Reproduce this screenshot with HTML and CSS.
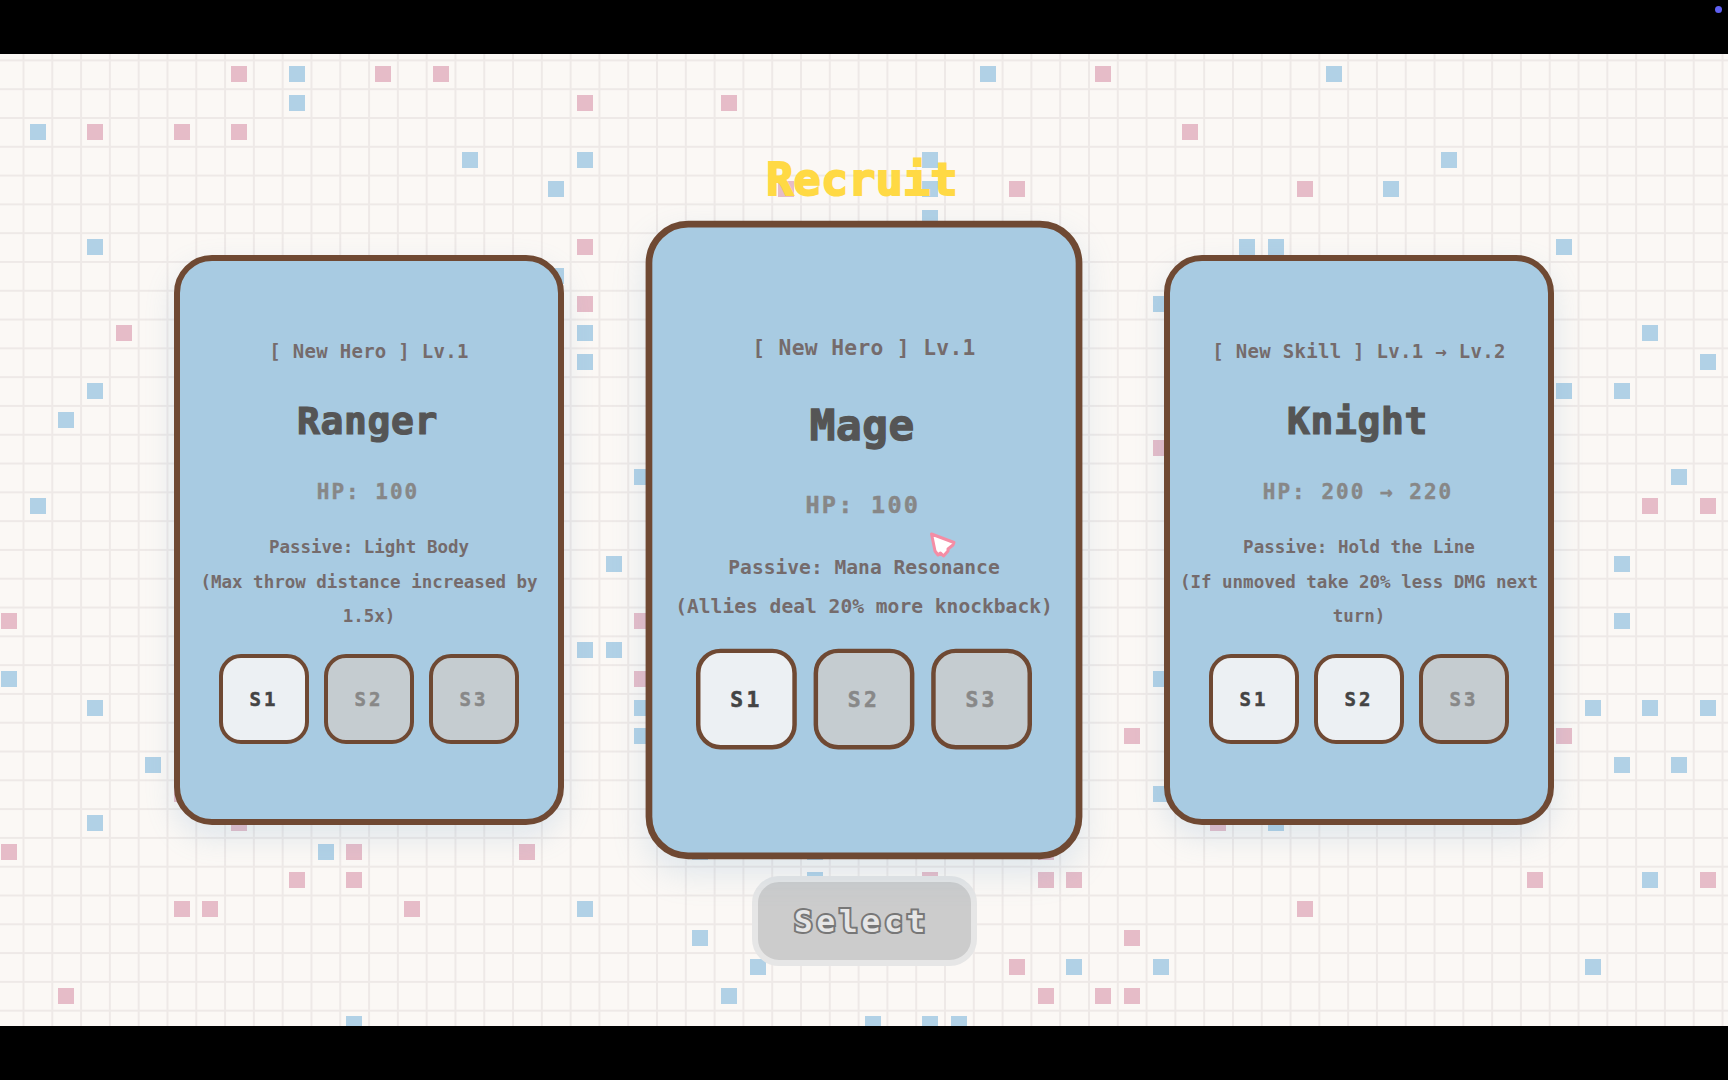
FILE: index.html
```html
<!DOCTYPE html>
<html lang="en">
<head>
    <meta charset="UTF-8">
    <meta name="viewport" content="width=device-width, initial-scale=1.0">
    <title>Recruit</title>
    <link rel="stylesheet" href="styles.css">
</head>
<body>
    <div class="letterbox"><span class="record-dot"></span></div>

    <main class="stage" id="stage">
        <div class="tiles" id="tiles"></div>

        <h1 class="title">Recruit</h1>

        <section class="cards">
            <article class="card">
                <p class="tag">[ New Hero ] Lv.1</p>
                <h2 class="name">Ranger</h2>
                <p class="hp">HP: 100</p>
                <p class="passive">Passive: Light Body<br>(Max throw distance increased by 1.5x)</p>
                <div class="skills">
                    <div class="skill">S1</div>
                    <div class="skill locked">S2</div>
                    <div class="skill locked">S3</div>
                </div>
            </article>

            <article class="card selected">
                <p class="tag">[ New Hero ] Lv.1</p>
                <h2 class="name">Mage</h2>
                <p class="hp">HP: 100</p>
                <p class="passive">Passive: Mana Resonance<br>(Allies deal 20% more knockback)</p>
                <div class="skills">
                    <div class="skill">S1</div>
                    <div class="skill locked">S2</div>
                    <div class="skill locked">S3</div>
                </div>
            </article>

            <article class="card">
                <p class="tag">[ New Skill ] Lv.1 → Lv.2</p>
                <h2 class="name">Knight</h2>
                <p class="hp">HP: 200 → 220</p>
                <p class="passive">Passive: Hold the Line<br>(If unmoved take 20% less DMG next turn)</p>
                <div class="skills">
                    <div class="skill">S1</div>
                    <div class="skill">S2</div>
                    <div class="skill locked">S3</div>
                </div>
            </article>
        </section>

        <button class="select-btn" disabled>Select</button>

        <svg class="cursor" width="29" height="28" viewBox="0 0 29 28">
            <path d="M3.5 3 L26 11.5 L25 14 L20 18 L20 20 L15.5 25 L12.5 22 L10 24 L7 20 Z" fill="#fff" stroke="#f48da5" stroke-width="3" stroke-linejoin="round"/>
        </svg>
    </main>

    <div class="letterbox"></div>

    <script src="main.js"></script>
</body>
</html>
```

FILE: styles.css
```css
:root {
    --paper: #fbf8f5;
    --grid-line: #eee9e7;
    --card-blue: #a8cbe2;
    --card-border: #6f4933;
    --pixel-font: 'DejaVu Sans Mono', 'Liberation Mono', monospace;
}

html, body {
    margin: 0;
    padding: 0;
    height: 100%;
    overflow: hidden;
    background: #000;
    font-family: var(--pixel-font);
    font-weight: bold;
}

.letterbox {
    position: relative;
    height: 54px;
    background: #000;
}

.record-dot {
    position: absolute;
    top: 6px;
    right: 6px;
    width: 7px;
    height: 7px;
    border-radius: 50%;
    background: #5f60f2;
}

.stage {
    position: relative;
    height: 972px;
    overflow: hidden;
    display: flex;
    flex-direction: column;
    align-items: center;
    background-color: var(--paper);
    background-image:
        linear-gradient(to right, var(--grid-line) 2px, transparent 2px),
        linear-gradient(to bottom, var(--grid-line) 2px, transparent 2px);
    background-size: 28.8px 28.8px;
    background-position: 22.5px 5.4px;
}

.tiles {
    position: absolute;
    inset: 0;
}

.tile {
    position: absolute;
    width: 16px;
    height: 16px;
}

.tile.pink { background: #e6bcc8; }
.tile.blue { background: #b1d1e6; }

.title {
    position: relative;
    margin: 98px 0 0;
    padding-right: 4px;
    height: 103px;
    font-size: 45px;
    letter-spacing: 0.3px;
    line-height: 56px;
    color: #ffd944;
    -webkit-text-stroke: 2px #ffd944;
}

.cards {
    position: relative;
    display: flex;
    gap: 105px;
}

.card {
    box-sizing: border-box;
    width: 390px;
    height: 570px;
    padding-top: 3px;
    border: 6px solid var(--card-border);
    border-radius: 38px;
    background: var(--card-blue);
    box-shadow: 0 12px 30px rgba(110, 160, 200, 0.2);
    display: flex;
    flex-direction: column;
    align-items: center;
    justify-content: center;
    text-align: center;
}

.card.selected {
    transform: scale(1.12);
    z-index: 1;
}

.tag {
    margin: 0;
    font-size: 19px;
    letter-spacing: 0.3px;
    line-height: 24px;
    color: #756b6c;
}

.name {
    margin: 36px 0 0;
    padding-right: 3px;
    font-size: 38px;
    letter-spacing: 0.6px;
    line-height: 44px;
    color: #555;
    -webkit-text-stroke: 1.2px #555;
}

.hp {
    margin: 35px 0 0;
    padding-right: 2px;
    font-size: 21px;
    letter-spacing: 2px;
    line-height: 28px;
    color: #878787;
    -webkit-text-stroke: 0.4px #878787;
}

.passive {
    margin: 24px 0 0;
    font-size: 17.5px;
    line-height: 34.4px;
    color: #756b6c;
}

.skills {
    display: flex;
    gap: 15px;
    margin-top: 20.5px;
}

.skill {
    box-sizing: border-box;
    width: 90px;
    height: 90px;
    border: 4px solid var(--card-border);
    border-radius: 22px;
    background: #ecf0f3;
    color: #444;
    font-size: 19px;
    letter-spacing: 3px;
    -webkit-text-stroke: 0.5px currentColor;
    display: flex;
    align-items: center;
    justify-content: center;
}

.skill.locked {
    background: #c5ccd0;
    color: #888;
}

.select-btn {
    position: relative;
    box-sizing: border-box;
    width: 225px;
    height: 90px;
    margin-top: 51px;
    border: 6px solid #e6e6e6;
    border-radius: 27px;
    background: #ccc;
    color: #e6e6e6;
    font-family: var(--pixel-font);
    font-weight: bold;
    font-size: 31px;
    letter-spacing: 3.8px;
    padding: 0 5px 0 0;
    -webkit-text-stroke: 4px #777;
    paint-order: stroke fill;
}

.cursor {
    position: absolute;
    left: 928px;
    top: 477px;
    z-index: 2;
}
```

FILE: main.js
```js
// background tiles, [row, [columns]] on the 28.8px grid
const TILES = {
    pink: [
        [0, [7, 12, 14, 37]], [1, [19, 24]], [2, [2, 5, 7, 40]], [4, [26, 34, 44]],
        [6, [19]], [8, [19]], [9, [3]], [13, [5, 39]], [15, [56, 58]], [19, [-1, 21]],
        [21, [21]], [23, [38, 53]], [25, [5]], [26, [7, 41]], [27, [-1, 11, 17, 35]],
        [28, [9, 11, 31, 35, 36, 52, 58]], [29, [5, 6, 13, 44]], [30, [38]], [31, [34]],
        [32, [1, 35, 37, 38]]
    ],
    blue: [
        [0, [9, 33, 45]], [1, [9]], [2, [0]], [3, [15, 19, 31, 49]], [4, [18, 31, 47]],
        [5, [31]], [6, [2, 42, 43, 53]], [7, [18]], [8, [39]], [9, [19, 56]], [10, [19, 58]],
        [11, [2, 53, 55]], [12, [1]], [14, [21, 57]], [15, [0]], [17, [20, 55]], [19, [55]],
        [20, [19, 20]], [21, [-1, 39]], [22, [2, 21, 54, 56, 58]], [23, [21]],
        [24, [4, 55, 57]], [25, [39]], [26, [2, 43]], [27, [10, 23, 27]], [28, [27, 56]],
        [29, [19]], [30, [23]], [31, [25, 36, 39, 54]], [32, [24]], [33, [11, 29, 31, 32]]
    ]
};

const tiles = document.getElementById('tiles');

Object.keys(TILES).forEach(color => {
    TILES[color].forEach(([row, cols]) => {
        cols.forEach(col => {
            const tile = document.createElement('div');
            tile.className = 'tile ' + color;
            tile.style.left = (29.6 + 28.8 * col) + 'px';
            tile.style.top = (12 + 28.8 * row) + 'px';
            tiles.appendChild(tile);
        });
    });
});
```
